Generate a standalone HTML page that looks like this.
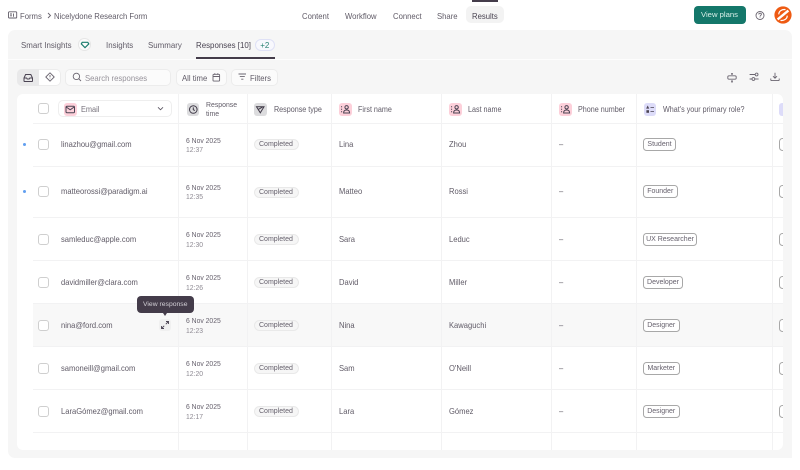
<!DOCTYPE html>
<html lang="en"><head><meta charset="utf-8"><title>Responses</title>
<style>
html,body{margin:0;padding:0;width:800px;height:470px;overflow:hidden;background:#fff}
#w{position:relative;width:800px;height:470px;overflow:hidden;font-family:"Liberation Sans",sans-serif;font-size:8.2px;color:#605b67;filter:blur(.3px)}
.b{position:absolute;box-sizing:border-box}
.t{position:absolute;white-space:nowrap;line-height:12px;margin-top:-5.5px;transform:scaleX(.92);transform-origin:0 50%}
.d{color:#66616d;font-size:7.4px}
.m{color:#8e8a93;font-size:7.4px}
.e{font-size:8.25px}
.n{font-size:8.25px;left:0}
.nav{font-size:8.4px}
.tab{font-size:8.6px}
.hd{font-size:7.8px}
.v{position:absolute;width:1px;top:94px;height:356px;background:#f2f2f3}
.h{position:absolute;left:33px;width:750px;height:1px;background:#f2f2f3}
.cb{position:absolute;left:38px;width:11px;height:11px;box-sizing:border-box;border:1px solid #cfcfcf;border-radius:3px;background:#fff}
.pill{position:absolute;left:253.5px;width:45.5px;height:11px;box-sizing:border-box;border:1px solid #e9e9e9;background:#f6f6f6;border-radius:6px;font-size:7px;line-height:9.6px;padding-left:4.5px;color:#66616d;white-space:nowrap}
.tag{position:absolute;left:643px;height:13px;box-sizing:border-box;border:1px solid #a8a8a8;border-radius:3.5px;font-size:7px;line-height:11.6px;text-align:center;color:#66616d;white-space:nowrap;background:#fff}
.tag2{position:absolute;left:778.5px;width:10px;height:13px;box-sizing:border-box;border:1px solid #a8a8a8;border-radius:3.5px;background:#fff}
.ic{position:absolute;width:12.5px;height:13px;border-radius:3px}
.ic svg,.abs{position:absolute;left:0;top:0;overflow:visible}
.pk{background:#fdd0da}.gy{background:#dcdcde}.pu{background:#dddcf9}
</style></head><body><div id="w">
<svg width="0" height="0" style="position:absolute"><defs>
<g id="person" fill="none" stroke="#4b4453" stroke-width="1"><circle cx="7.6" cy="4.3" r="1.7"/><path d="M4.6 10c0-2.2 1.3-3 3-3s3 .8 3 3z"/><path d="M2 3.8h1.1M2 6.3h1.1M2 8.8h1.1"/></g>
</defs></svg>

<!-- top bar -->
<svg class="abs" style="left:8px;top:11px" width="10" height="8" fill="none" stroke="#625c68" stroke-width=".9"><rect x=".5" y=".8" width="8.2" height="6.2" rx=".8"/><path d="M2 3h2M2 4.8h2M5.5 2.5v3.2"/></svg>
<span class="t nav" style="left:20.3px;top:15px">Forms</span>
<svg class="abs" style="left:46.5px;top:12px" width="5" height="7" fill="none" stroke="#6a6570" stroke-width=".9"><path d="M1 1l2.5 2.5L1 6"/></svg>
<span class="t nav" style="left:54.3px;top:15px">Nicelydone Research Form</span>
<span class="t nav" style="left:302.3px;top:15px">Content</span>
<span class="t nav" style="left:345.3px;top:15px">Workflow</span>
<span class="t nav" style="left:392.8px;top:15px">Connect</span>
<span class="t nav" style="left:437px;top:15px">Share</span>
<div class="b" style="left:465.5px;top:6px;width:38.5px;height:17px;background:#f3f3f3;border-radius:5px"></div>
<span class="t nav" style="left:472.3px;top:15px;color:#4a4452">Results</span>
<div class="b" style="left:472px;top:0;width:25.5px;height:1.6px;background:#443c4a"></div>
<div class="b" style="left:693.5px;top:6px;width:52px;height:17.5px;background:#14776a;border-radius:4px;color:#d9efe9;font-size:7.7px;line-height:18px;text-align:center">View plans</div>
<svg class="abs" style="left:754px;top:9.5px" width="12" height="12" fill="none" stroke="#6a6570" stroke-width=".9"><circle cx="6" cy="5.5" r="4"/><path d="M4.7 4.4c.2-1.6 2.7-1.6 2.7 0 0 1-1.4 1-1.4 2.2M6 7.4v.5"/></svg>
<svg class="abs" style="left:774px;top:6px" width="18" height="18"><circle cx="9" cy="9" r="8.6" fill="#ee5a12"/><path d="M3.6 13.4 14.4 4.6" stroke="#fff" stroke-width="2.4"/><path d="M4.8 8.4C4.6 5.2 8 3 11.5 3.6M13.2 9.6c.2 3.2-3.2 5.4-6.7 4.8" stroke="#fff" stroke-width="1.2" fill="none"/></svg>

<!-- panel -->
<div class="b" style="left:8px;top:30px;width:783.5px;height:428px;background:#f6f6f6;border-radius:7px"></div>
<div class="b" style="left:8px;top:59px;width:783.5px;height:1px;background:#fdfdfd"></div>
<span class="t tab" style="left:21.2px;top:44.5px">Smart Insights</span>
<div class="b" style="left:78.3px;top:38.3px;width:12.6px;height:12.6px;border-radius:50%;background:#fbfbfb;border:1px solid #e6e6e6"></div>
<svg class="abs" style="left:80.5px;top:41px" width="9" height="8" fill="none" stroke="#1b7c6d" stroke-width="1.2"><path d="M1.2 1.3h5.6l1 1.6-3.8 3.8L.3 2.9z"/></svg>
<span class="t tab" style="left:105.5px;top:44.5px">Insights</span>
<span class="t tab" style="left:148px;top:44.5px">Summary</span>
<span class="t tab" style="left:196.2px;top:44.5px;color:#4a4452">Responses [10]</span>
<div class="b" style="left:254.8px;top:38.5px;width:20px;height:12.5px;border-radius:6px;background:#f8f8fd;border:1px solid #dfe1f6;color:#2a8272;font-size:8px;line-height:11px;text-align:center">+2</div>
<div class="b" style="left:196px;top:57.3px;width:79px;height:1.7px;background:#443c4a"></div>

<!-- toolbar -->
<div class="b" style="left:17px;top:68.5px;width:44px;height:17px;background:#fff;border:1px solid #ececec;border-radius:5px"></div>
<div class="b" style="left:17px;top:68.5px;width:22px;height:17px;background:#e9e9ea;border-radius:5px 0 0 5px"></div>
<svg class="abs" style="left:23px;top:72.5px" width="11" height="10" fill="none" stroke="#4b4453" stroke-width="1"><path d="M1 5 2.6 1.5h5.2L9.5 5v2.7a.8.8 0 0 1-.8.8H1.8a.8.8 0 0 1-.8-.8z"/><path d="M1 5h2.6l.6 1h2l.6-1h2.7"/></svg>
<svg class="abs" style="left:44.5px;top:72px" width="10" height="10" fill="none" stroke="#6a6570" stroke-width=".9"><path d="M5 .8 9.2 5 5 9.2.8 5z" stroke-linejoin="round"/><path d="M5 3v2.4M5 6.6v.5"/></svg>
<div class="b" style="left:65px;top:68.5px;width:105.5px;height:17px;background:#fbfbfb;border:1px solid #ececec;border-radius:5px"></div>
<svg class="abs" style="left:71.5px;top:72px" width="10" height="10" fill="none" stroke="#6a6570" stroke-width=".9"><circle cx="4.4" cy="4.4" r="3.2"/><path d="M6.8 6.8 9 9"/></svg>
<span class="t nav" style="left:84.8px;top:77px;color:#96929a">Search responses</span>
<div class="b" style="left:175.5px;top:68.5px;width:51px;height:17px;background:#fbfbfb;border:1px solid #ececec;border-radius:5px"></div>
<span class="t nav" style="left:182px;top:77px">All time</span>
<svg class="abs" style="left:211.5px;top:72.5px" width="9" height="9" fill="none" stroke="#6a6570" stroke-width=".9"><rect x="1" y="1.3" width="6.6" height="6.8" rx=".8"/><path d="M1 3.5h6.6M2.8.3v1.4M5.8.3v1.4"/></svg>
<div class="b" style="left:231px;top:68.5px;width:46.5px;height:17px;background:#fbfbfb;border:1px solid #ececec;border-radius:5px"></div>
<svg class="abs" style="left:237.5px;top:73px" width="9" height="8" fill="none" stroke="#6a6570" stroke-width=".9"><path d="M.5 1h7.5M1.8 3.6h5M3.2 6.2h2.2"/></svg>
<span class="t nav" style="left:249.5px;top:77px">Filters</span>
<svg class="abs" style="left:727px;top:71.5px" width="11" height="12" fill="none" stroke="#6a6570" stroke-width=".9"><rect x=".8" y="3.8" width="8.4" height="3.4" rx="1.2"/><path d="M5 1v2M5 8v2.5M4 1.8h2M4 9.8h2"/></svg>
<svg class="abs" style="left:748.5px;top:72px" width="11" height="10" fill="none" stroke="#6a6570" stroke-width=".9"><path d="M.6 2.5h5.4M.6 7h2.2"/><circle cx="7.6" cy="2.5" r="1.4"/><circle cx="4.4" cy="7" r="1.4"/><path d="M6 7h3.6"/></svg>
<svg class="abs" style="left:769.5px;top:72px" width="10" height="10" fill="none" stroke="#6a6570" stroke-width=".9"><path d="M5 .8v5.2M3 4.2 5 6.2l2-2M.8 6.5v1.2c0 .6.4.9.9.9h6.6c.5 0 .9-.3.9-.9V6.5"/></svg>

<!-- table -->
<div class="b" style="left:17px;top:94px;width:766px;height:356px;background:#fff;border-radius:6px"></div>
<div class="b" style="left:33px;top:303.3px;width:750px;height:43.4px;background:#f8f8f8"></div>
<div class="v" style="left:178px"></div><div class="v" style="left:247px"></div><div class="v" style="left:331px"></div><div class="v" style="left:441px"></div><div class="v" style="left:551px"></div><div class="v" style="left:636px"></div><div class="v" style="left:772px"></div>
<div class="h" style="top:123px"></div><div class="h" style="top:166px"></div><div class="h" style="top:217px"></div><div class="h" style="top:260px"></div><div class="h" style="top:303px"></div><div class="h" style="top:346px"></div><div class="h" style="top:389px"></div><div class="h" style="top:432px"></div>

<!-- header -->
<div class="cb" style="top:103px"></div>
<div class="b" style="left:57.5px;top:100px;width:114px;height:17px;border:1px solid #eee;border-radius:5px;background:#fff"></div>
<div class="ic pk" style="left:64px;top:102.5px"><svg width="12.5" height="13" fill="none" stroke="#4b4453" stroke-width="1"><rect x="2" y="3.2" width="8.5" height="6.6" rx="1"/><path d="M2.2 4l4 2.8 4-2.8"/></svg></div>
<span class="t" style="left:81px;top:109px;font-size:8px;color:#77727c">Email</span>
<svg class="abs" style="left:157px;top:106px" width="7" height="6" fill="none" stroke="#5c5662" stroke-width=".9"><path d="M1 1.3 3.5 3.8 6 1.3"/></svg>
<div class="ic gy" style="left:186.5px;top:102.5px"><svg width="12.5" height="13" fill="none" stroke="#3f3947" stroke-width="1"><circle cx="6.3" cy="6.5" r="3.8"/><path d="M6.3 4.4v2.3l1.5.9"/></svg></div>
<span class="t" style="left:205.5px;top:104.5px;font-size:7.5px">Response</span>
<span class="t" style="left:205.5px;top:113.5px;font-size:7.5px">time</span>
<div class="ic gy" style="left:254px;top:102.5px"><svg width="12.5" height="13" fill="none" stroke="#3f3947" stroke-width="1"><path d="M2.5 3.8h7.5L6.3 9.8zM4.5 6.3l4-2.2"/></svg></div>
<span class="t hd" style="left:273.5px;top:109px">Response type</span>
<div class="ic pk" style="left:339px;top:102.5px"><svg width="12.5" height="13"><use href="#person"/></svg></div>
<span class="t hd" style="left:358px;top:109px">First name</span>
<div class="ic pk" style="left:449px;top:102.5px"><svg width="12.5" height="13"><use href="#person"/></svg></div>
<span class="t hd" style="left:468px;top:109px">Last name</span>
<div class="ic pk" style="left:559px;top:102.5px"><svg width="12.5" height="13"><use href="#person"/></svg></div>
<span class="t hd" style="left:578px;top:109px">Phone number</span>
<div class="ic pu" style="left:643.5px;top:102.5px"><svg width="12.5" height="13" fill="#4b4453" stroke="#4b4453" stroke-width=".8"><path d="M2.8 5.2l.9-1.8.9 1.8z"/><rect x="2.8" y="7.6" width="1.8" height="1.8"/><path d="M6.5 4.4h3.5M6.5 8.5h3.5" fill="none"/></svg></div>
<span class="t hd" style="left:663px;top:109px">What's your primary role?</span>
<div class="b" style="left:779px;top:102.5px;width:4px;height:13px;background:#dddcf9;border-radius:3px 0 0 3px"></div>

<!-- rows -->
<div class="b" style="left:23.3px;top:143.2px;width:3px;height:3px;border-radius:50%;background:#629ff0"></div>
<div class="b" style="left:23.3px;top:190.2px;width:3px;height:3px;border-radius:50%;background:#629ff0"></div>

<div class="cb" style="top:139.2px"></div><span class="t e" style="left:61.3px;top:144.7px">linazhou@gmail.com</span>
<span class="t d" style="left:186px;top:140px">6 Nov 2025</span><span class="t m" style="left:186px;top:149.7px">12:37</span>
<div class="pill" style="top:139.3px">Completed</div><span class="t n" style="left:338.5px;top:144.7px">Lina</span><span class="t n" style="left:448.7px;top:144.7px">Zhou</span><span class="t" style="left:559px;top:144.7px">–</span>
<div class="tag" style="top:138.3px;width:33px">Student</div><div class="tag2" style="top:138.3px"></div>

<div class="cb" style="top:186.2px"></div><span class="t e" style="left:61.3px;top:191.7px">matteorossi@paradigm.ai</span>
<span class="t d" style="left:186px;top:187px">6 Nov 2025</span><span class="t m" style="left:186px;top:196.7px">12:35</span>
<div class="pill" style="top:186.5px">Completed</div><span class="t n" style="left:338.5px;top:191.7px">Matteo</span><span class="t n" style="left:448.7px;top:191.7px">Rossi</span><span class="t" style="left:559px;top:191.7px">–</span>
<div class="tag" style="top:185.3px;width:34.5px">Founder</div><div class="tag2" style="top:185.3px"></div>

<div class="cb" style="top:233.7px"></div><span class="t e" style="left:61.3px;top:239.2px">samleduc@apple.com</span>
<span class="t d" style="left:186px;top:234.5px">6 Nov 2025</span><span class="t m" style="left:186px;top:244.2px">12:30</span>
<div class="pill" style="top:233.7px">Completed</div><span class="t n" style="left:338.5px;top:239.2px">Sara</span><span class="t n" style="left:448.7px;top:239.2px">Leduc</span><span class="t" style="left:559px;top:239.2px">–</span>
<div class="tag" style="top:232.7px;width:54px">UX Researcher</div><div class="tag2" style="top:232.7px"></div>

<div class="cb" style="top:276.7px"></div><span class="t e" style="left:61.3px;top:282.2px">davidmiller@clara.com</span>
<span class="t d" style="left:186px;top:277.7px">6 Nov 2025</span><span class="t m" style="left:186px;top:287.3px">12:26</span>
<div class="pill" style="top:276.7px">Completed</div><span class="t n" style="left:338.5px;top:282.2px">David</span><span class="t n" style="left:448.7px;top:282.2px">Miller</span><span class="t" style="left:559px;top:282.2px">–</span>
<div class="tag" style="top:275.7px;width:40px">Developer</div><div class="tag2" style="top:275.7px"></div>

<div class="cb" style="top:319.7px"></div><span class="t e" style="left:61.3px;top:325.2px">nina@ford.com</span>
<span class="t d" style="left:186px;top:320.7px">6 Nov 2025</span><span class="t m" style="left:186px;top:330.3px">12:23</span>
<div class="pill" style="top:319.7px">Completed</div><span class="t n" style="left:338.5px;top:325.2px">Nina</span><span class="t n" style="left:448.7px;top:325.2px">Kawaguchi</span><span class="t" style="left:559px;top:325.2px">–</span>
<div class="tag" style="top:318.7px;width:36.5px">Designer</div><div class="tag2" style="top:318.7px"></div>

<div class="cb" style="top:362.7px"></div><span class="t e" style="left:61.3px;top:368.2px">samoneill@gmail.com</span>
<span class="t d" style="left:186px;top:363.5px">6 Nov 2025</span><span class="t m" style="left:186px;top:373.2px">12:20</span>
<div class="pill" style="top:362.7px">Completed</div><span class="t n" style="left:338.5px;top:368.2px">Sam</span><span class="t n" style="left:448.7px;top:368.2px">O'Neill</span><span class="t" style="left:559px;top:368.2px">–</span>
<div class="tag" style="top:361.7px;width:36.5px">Marketer</div><div class="tag2" style="top:361.7px"></div>

<div class="cb" style="top:405.7px"></div><span class="t e" style="left:61.3px;top:411.2px">LaraGómez@gmail.com</span>
<span class="t d" style="left:186px;top:406.5px">6 Nov 2025</span><span class="t m" style="left:186px;top:416.2px">12:17</span>
<div class="pill" style="top:405.7px">Completed</div><span class="t n" style="left:338.5px;top:411.2px">Lara</span><span class="t n" style="left:448.7px;top:411.2px">Gómez</span><span class="t" style="left:559px;top:411.2px">–</span>
<div class="tag" style="top:404.7px;width:36.5px">Designer</div><div class="tag2" style="top:404.7px"></div>

<!-- right clip over the next-column tags -->
<div class="b" style="left:783px;top:94px;width:8.5px;height:364px;background:#f6f6f6"></div>

<!-- hover tools -->
<div class="b" style="left:159px;top:319px;width:12px;height:12px;background:#f0f0f0;border-radius:3px"></div>
<svg class="abs" style="left:159px;top:319px" width="12" height="12" fill="none" stroke="#4b4453" stroke-width=".9"><path d="M7 2.5h2.5V5M9.5 2.5 6.8 5.2M2.5 7v2.5H5M2.5 9.5l2.7-2.7"/></svg>
<div class="b" style="left:137px;top:296px;width:56.5px;height:17px;background:#443c4a;border-radius:4px;color:#d2cfd5;font-size:6.8px;line-height:17px;text-align:center">View response</div>
<div class="b" style="left:162.7px;top:313px;width:0;height:0;border-left:2.5px solid transparent;border-right:2.5px solid transparent;border-top:3px solid #443c4a"></div>
</div></body></html>
